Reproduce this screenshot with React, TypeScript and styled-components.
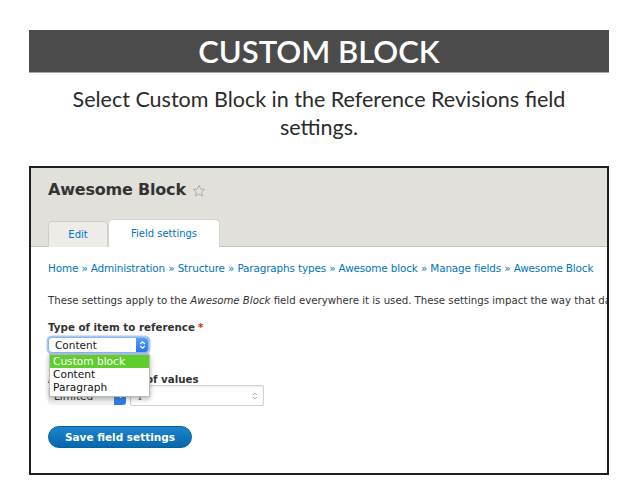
import styled, { createGlobalStyle } from 'styled-components';

const GlobalStyle = createGlobalStyle`
  html, body {
    margin: 0;
    padding: 0;
    background: #ffffff;
  }
`;

const Slide = styled.div`
  width: 638px;
  height: 493px;
  padding-top: 30px;
  box-sizing: border-box;
  font-family: Lato, "Noto Sans", sans-serif;
`;

const TitleBar = styled.h1`
  margin: 0 29px;
  height: 43px;
  background: #4b4b4b;
  border-bottom: 1px solid #a8a8a8;
  box-sizing: border-box;
  color: #ffffff;
  font-size: 31px;
  font-weight: 600;
  line-height: 42px;
  text-align: center;
  letter-spacing: 0;
`;

const Lead = styled.p`
  margin: 12px 40px 0;
  color: #2b2b2b;
  font-size: 21.5px;
  line-height: 28px;
  text-align: center;
`;

const Frame = styled.div`
  margin: 25px 0 0 29px;
  width: 580px;
  height: 309px;
  border: 2px solid #1f1f1f;
  box-sizing: border-box;
  overflow: hidden;
  background: #ffffff;
  font-family: "DejaVu Sans", Verdana, sans-serif;
  color: #333333;
`;

const Header = styled.div`
  background: #e1e0db;
  border-bottom: 1px solid #c2c1bc;
  padding: 11px 0 0 17px;
  height: 79px;
  box-sizing: border-box;
  display: flex;
  flex-direction: column;
  justify-content: space-between;
`;

const PageTitle = styled.h2`
  margin: 0;
  display: flex;
  align-items: center;
  gap: 6px;
  font-size: 16px;
  font-weight: 700;
  line-height: 22px;
  color: #333333;
  letter-spacing: -0.2px;
`;

const Star = styled.svg`
  width: 14px;
  height: 14px;
  margin-top: 1px;
`;

const Tabs = styled.div`
  display: flex;
  align-items: flex-end;
`;

const Tab = styled.div<{ $active?: boolean }>`
  height: ${(p) => (p.$active ? '28px' : '26px')};
  padding: 0 ${(p) => (p.$active ? '21px' : '20px')};
  width: ${(p) => (p.$active ? '112px' : '60px')};
  box-sizing: border-box;
  display: flex;
  align-items: center;
  justify-content: center;
  background: ${(p) => (p.$active ? '#ffffff' : '#edece8')};
  border: 1px solid ${(p) => (p.$active ? '#d6d5d0' : '#cfcec9')};
  border-bottom: none;
  border-radius: 5px 5px 0 0;
  color: #0074bd;
  font-size: 10px;
  white-space: nowrap;
  margin-bottom: -1px;
`;

const Body = styled.div`
  padding: 14px 0 0 17px;
  position: relative;
`;

const Breadcrumb = styled.div`
  font-size: 10.45px;
  line-height: 14px;
  color: #0074bd;
  white-space: nowrap;
  letter-spacing: -0.15px;
`;

const Description = styled.p`
  margin: 19px 0 0;
  font-size: 10.2px;
  line-height: 14px;
  white-space: nowrap;
  color: #333333;
`;

const Label = styled.div`
  margin-top: 12px;
  font-size: 10.3px;
  font-weight: 700;
  line-height: 14px;
  color: #333333;
  white-space: nowrap;
`;

const Required = styled.span`
  color: #e32700;
  margin-left: 3px;
`;

const FieldWrap = styled.div`
  position: relative;
  margin-top: 3px;
  width: 101px;
`;

const SelectBox = styled.div`
  height: 16px;
  width: 101px;
  box-sizing: border-box;
  background: #ffffff;
  border: 1px solid #8fb6ee;
  border-radius: 4px;
  box-shadow: 0 0 0 1.5px #a7c8f5;
  display: flex;
  align-items: center;
  justify-content: space-between;
  padding-left: 6px;
  font-size: 10.5px;
  color: #1a1a1a;
`;

const ArrowCap = styled.span<{ $height: number }>`
  width: 12px;
  height: ${(p) => p.$height}px;
  background: linear-gradient(#5aa0f7, #2a78ec);
  border-radius: 0 3px 3px 0;
  display: flex;
  align-items: center;
  justify-content: center;
`;

const Dropdown = styled.ul`
  position: absolute;
  left: 1px;
  top: 17px;
  width: 99px;
  margin: 0;
  padding: 0 0 2px;
  list-style: none;
  background: #ffffff;
  border: 1px solid #b9b9b9;
  box-shadow: 0 2px 5px rgba(0, 0, 0, 0.3);
  z-index: 2;
  font-size: 10.6px;
  line-height: 13px;
`;

const Option = styled.li<{ $selected?: boolean }>`
  padding: 0 3px;
  color: ${(p) => (p.$selected ? '#ffffff' : '#111111')};
  background: ${(p) => (p.$selected ? '#5fcd2e' : 'transparent')};
  white-space: nowrap;
`;

const SubLabel = styled(Label)`
  margin-top: 19px;
`;

const CardinalityRow = styled.div`
  display: flex;
  align-items: center;
  gap: 4px;
  margin-top: -1px;
`;

const LimitedSelect = styled.div`
  width: 78px;
  height: 18px;
  box-sizing: border-box;
  background: #f3f3f3;
  border-radius: 3px;
  display: flex;
  align-items: center;
  justify-content: space-between;
  padding-left: 6px;
  font-size: 10.5px;
  color: #333333;
`;

const NumberInput = styled.div`
  width: 134px;
  height: 21px;
  box-sizing: border-box;
  border: 1px solid #d2d2d2;
  border-radius: 2px;
  box-shadow: inset 0 1px 2px rgba(0, 0, 0, 0.08);
  display: flex;
  align-items: center;
  justify-content: space-between;
  padding: 0 5px 0 6px;
  font-family: "Liberation Serif", serif;
  font-size: 11px;
  color: #555555;
`;

const SaveButton = styled.button`
  display: block;
  margin-top: 20px;
  width: 144px;
  height: 22px;
  border: 1px solid #0a5f9e;
  border-radius: 11px;
  background: linear-gradient(#1f84cd, #0668ad);
  color: #ffffff;
  font-family: "DejaVu Sans", Verdana, sans-serif;
  font-size: 10.5px;
  font-weight: 700;
  padding: 0;
  cursor: pointer;
`;

const Chevrons = ({ both }: { both?: boolean }) => (
  <svg width="7" height="10" viewBox="0 0 7 10">
    {both && <path d="M1.2 4 L3.5 1.8 L5.8 4" fill="none" stroke="#ffffff" strokeWidth="1.1" />}
    <path
      d={both ? 'M1.2 6 L3.5 8.2 L5.8 6' : 'M1.2 4 L3.5 6.4 L5.8 4'}
      fill="none"
      stroke="#ffffff"
      strokeWidth="1.1"
    />
  </svg>
);

const Spinner = () => (
  <svg width="6" height="10" viewBox="0 0 6 10">
    <path d="M1.2 4 L3 2.2 L4.8 4" fill="none" stroke="#9a9a9a" strokeWidth="0.9" />
    <path d="M1.2 6 L3 7.8 L4.8 6" fill="none" stroke="#9a9a9a" strokeWidth="0.9" />
  </svg>
);

const crumbs = [
  'Home',
  'Administration',
  'Structure',
  'Paragraphs types',
  'Awesome block',
  'Manage fields',
  'Awesome Block',
];

export default function App(): JSX.Element {
  return (
    <Slide>
      <GlobalStyle />
      <TitleBar>CUSTOM BLOCK</TitleBar>
      <Lead>Select Custom Block in the Reference Revisions field settings.</Lead>
      <Frame>
        <Header>
          <PageTitle>
            Awesome Block
            <Star viewBox="0 0 24 24">
              <path
                d="M12 2.5l2.9 6.1 6.6.8-4.9 4.6 1.3 6.6L12 17.3l-5.9 3.3 1.3-6.6-4.9-4.6 6.6-.8z"
                fill="none"
                stroke="#a9a8a3"
                strokeWidth="1.5"
                strokeLinejoin="round"
              />
            </Star>
          </PageTitle>
          <Tabs>
            <Tab>Edit</Tab>
            <Tab $active>Field settings</Tab>
          </Tabs>
        </Header>
        <Body>
          <Breadcrumb>{crumbs.join(' » ')}</Breadcrumb>
          <Description>
            These settings apply to the <em>Awesome Block</em> field everywhere it is used. These
            settings impact the way that data is stored in the database and cannot be changed once
            data has been created.
          </Description>
          <Label>
            Type of item to reference<Required>*</Required>
          </Label>
          <FieldWrap>
            <SelectBox>
              Content
              <ArrowCap $height={14}>
                <Chevrons both />
              </ArrowCap>
            </SelectBox>
            <Dropdown>
              <Option $selected>Custom block</Option>
              <Option>Content</Option>
              <Option>Paragraph</Option>
            </Dropdown>
          </FieldWrap>
          <SubLabel>Allowed number of values</SubLabel>
          <CardinalityRow>
            <LimitedSelect>
              Limited
              <ArrowCap $height={18}>
                <Chevrons />
              </ArrowCap>
            </LimitedSelect>
            <NumberInput>
              1
              <Spinner />
            </NumberInput>
          </CardinalityRow>
          <SaveButton>Save field settings</SaveButton>
        </Body>
      </Frame>
    </Slide>
  );
}
